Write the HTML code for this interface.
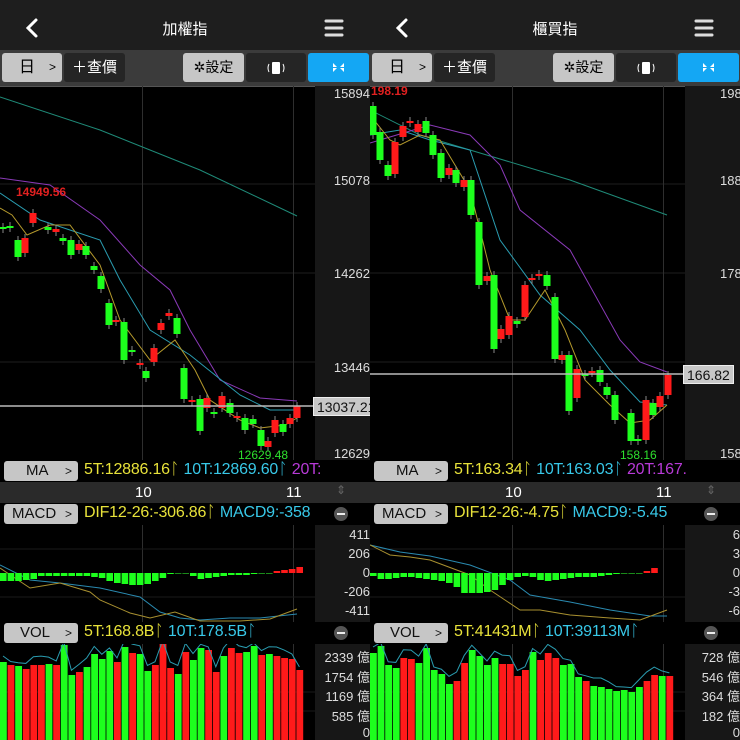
<!DOCTYPE html>
<html><head><meta charset="utf-8"><style>
*{margin:0;padding:0;box-sizing:border-box}
body{width:740px;height:740px;background:#000;overflow:hidden;position:relative;font-family:"Liberation Sans","Noto Sans CJK TC",sans-serif}
.p{position:absolute;top:0;width:370px;height:740px;overflow:hidden}
.top{position:absolute;left:0;top:0;width:370px;height:50px;background:#1e1e1e;color:#fff}
.title{position:absolute;left:0;width:370px;top:18px;text-align:center;font-size:15px}
.tb{position:absolute;top:50px;left:0;width:370px;height:36px;background:#3b3b3b}
.b{position:absolute;top:3px;height:29px;border-radius:3px;font-size:14px;line-height:29px;text-align:center}
.lb{background:#c6c6c6;color:#000}.db{background:#252525;color:#fff}
.row{position:absolute;left:0;width:370px;height:22px;background:#000}
.btn{position:absolute;left:4px;top:1px;width:74px;height:20px;background:#c6c6c6;border-radius:3px;color:#111;font-size:15px;line-height:20px;padding-left:22px}
.btn i{position:absolute;right:6px;font-style:normal;font-size:12px}
.lab{position:absolute;left:84px;top:1px;font-size:16px;white-space:nowrap;letter-spacing:-0.2px}
svg{position:absolute;left:0;top:0}
.ax{position:absolute;font-size:13px;color:#ddd;text-align:right}
</style></head><body>
<div class="p" id="p0" style="left:0"></div>
<div class="p" id="p1" style="left:370px"></div>
<script>
const L={title:"加權指",
c:[[3,227,229,'g'],[10,226,228,'g'],[18,240,257,'g'],[25,238,253,'r'],[33,213,223,'r'],[48,227,230,'g'],[56,229,232,'r'],[63,238,241,'g'],[71,240,255,'g'],[79,244,250,'r'],[86,246,255,'g'],[94,266,270,'g'],[101,276,289,'g'],[109,303,325,'g'],[116,320,322,'r'],[124,322,360,'g'],[132,350,352,'g'],[140,363,365,'r'],[146,371,378,'g'],[154,348,362,'r'],[161,323,330,'r'],[169,313,316,'r'],[177,318,334,'g'],[184,368,399,'g'],[192,400,402,'r'],[200,399,431,'g'],[207,398,408,'r'],[214,412,414,'g'],[222,396,408,'r'],[230,403,413,'g'],[237,416,418,'r'],[245,418,430,'g'],[253,419,424,'g'],[261,430,446,'g'],[268,441,447,'r'],[275,420,433,'r'],[283,424,432,'g'],[290,418,424,'r'],[297,406,418,'r']],
teal:"0,97 100,130 200,170 297,216",
pur:"0,178 50,185 100,220 140,265 170,290 190,330 220,380 260,398 297,401",
cy:"0,193 40,220 100,240 120,280 150,330 190,355 240,395 270,410 297,410",
ye:"0,208 12,215 27,235 50,225 70,225 100,265 120,320 150,360 175,340 195,370 210,400 240,420 260,428 285,425 297,418",
ax:["15894","15078","14262","13446","12629"],price:"13037.21",py:406,
hi:["14949.56",16,196],lo:["12629.48",238,459],
ma:["5T:12886.16","10T:12869.60","20T:"],
macd:["DIF12-26:-306.86","MACD9:-358"],
mh:[8,8,8,7,6,3,3,3,3,3,3,3,4,5,8,10,11,12,12,11,8,5,1,0,0,3,6,5,4,3,2,2,2,1,0,0,-2,-3,-4,-6],
mx:["411","206","0","-206","-411"],
md1:"0,565 30,580 60,583 100,588 140,597 160,612 180,618 200,620 230,618 260,618 297,614",
md2:"0,568 30,588 60,583 90,592 100,600 130,613 150,618 175,612 200,621 240,621 270,619 297,609",
vol:["5T:168.8B","10T:178.5B"],
vt:[662,665,666,669,665,665,664,665,645,675,672,667,654,659,651,662,647,653,654,671,665,644,668,674,652,660,648,650,672,656,648,653,652,646,655,654,656,658,659,670],
vc:"grgrrrgrggrggggrgrggrrrgrggrrgrrggrgrrrr",
vx:["2339 億","1754 億","1169 億","585 億","0"]};
const R={title:"櫃買指",
c:[[3,106,135,'g'],[10,132,160,'g'],[18,165,176,'g'],[25,142,174,'r'],[33,126,137,'r'],[40,121,123,'r'],[48,124,132,'r'],[56,121,133,'g'],[63,135,155,'g'],[71,153,178,'g'],[79,168,175,'r'],[86,170,183,'g'],[94,180,187,'r'],[101,180,215,'g'],[109,222,285,'g'],[117,276,281,'r'],[124,275,349,'g'],[131,329,339,'r'],[139,316,335,'r'],[147,321,324,'g'],[155,285,317,'r'],[162,278,280,'r'],[169,274,276,'r'],[177,275,286,'g'],[185,297,359,'g'],[192,355,360,'r'],[199,355,411,'g'],[207,369,398,'r'],[215,374,376,'g'],[222,371,373,'r'],[230,370,382,'g'],[237,387,395,'g'],[245,395,420,'g'],[261,413,441,'g'],[268,439,441,'g'],[276,400,440,'r'],[283,403,415,'g'],[290,396,407,'r'],[298,375,395,'r']],
teal:"0,110 50,135 100,150 200,180 297,215",
pur:"0,143 60,125 100,135 130,165 150,210 200,250 250,340 270,362 297,372",
cy:"0,135 30,130 60,140 100,150 130,240 170,295 210,330 240,370 270,402 297,405",
ye:"0,115 20,140 30,145 50,135 70,140 100,190 120,270 140,320 155,320 175,290 195,330 215,380 240,405 260,423 280,420 297,405",
ax:["198","188","178","","158"],price:"166.82",py:374,
hi:["198.19",1,95],lo:["158.16",250,459],
ma:["5T:163.34","10T:163.03","20T:167."],
macd:["DIF12-26:-4.75","MACD9:-5.45"],
mh:[3,6,6,5,4,4,5,6,7,8,10,14,20,20,20,19,17,12,7,4,3,4,7,8,7,6,5,4,4,4,3,2,1,0,0,0,-2,-5],
mx:["6","3","0","-3","-6"],
md1:"0,545 30,552 60,556 100,565 140,580 160,595 200,602 240,610 280,616 297,616",
md2:"0,545 20,555 40,557 60,560 100,575 120,590 150,610 170,610 200,615 240,618 270,620 297,610",
vol:["5T:41431M","10T:39113M"],
vt:[653,646,665,668,658,659,663,648,670,674,684,681,663,650,656,665,658,664,664,676,670,652,660,653,658,665,664,677,681,686,687,689,691,690,692,687,681,675,676,676],
vc:"ggggrrgggggrrggggrrrrgrrrgggrgggggggrrgr",
vx:["728 億","546 億","364 億","182 億","0"]};
function build(id,d){
 const G='#1dff1d',Rd='#ff1a1a';
 let s=`<svg width="370" height="740">`;
 s+=`<rect x="315" y="86" width="55" height="375" fill="#171717"/><rect x="315" y="525" width="55" height="97" fill="#171717"/><rect x="315" y="643" width="55" height="97" fill="#171717"/>`;
 s+=`<line x1="0" y1="86.5" x2="315" y2="86.5" stroke="#555"/>`;
 for(const y of [184,273,362])s+=`<line x1="0" y1="${y}" x2="315" y2="${y}" stroke="#1e1e1e"/>`;
 for(const x of [142.5,293.5])for(const [a,b] of [[86,460],[525,622],[643,740]])s+=`<line x1="${x}" y1="${a}" x2="${x}" y2="${b}" stroke="#2e2e2e"/>`;
 for(const y of [549,597,692,711])s+=`<line x1="0" y1="${y}" x2="315" y2="${y}" stroke="#1a1a1a"/>`;
 const pl=(p,c)=>`<polyline points="${p}" fill="none" stroke="${c}" stroke-width="1"/>`;
 s+=pl(d.teal,'#1f8a78')+pl(d.pur,'#8a3ab8')+pl(d.cy,'#2a9cb0')+pl(d.ye,'#b59a2c');
 for(const [x,t,b,c] of d.c){const col=c=='g'?G:Rd;s+=`<line x1="${x}" y1="${t-4}" x2="${x}" y2="${b+4}" stroke="#888"/><rect x="${x-3.5}" y="${t}" width="7" height="${Math.max(2,b-t)}" fill="${col}"/>`;}
 s+=`<line x1="0" y1="${d.py}" x2="315" y2="${d.py}" stroke="#bbb" stroke-width="1.5"/>`;
 s+=`<text x="${d.hi[1]}" y="${d.hi[2]}" fill="#e02020" font-size="12" font-weight="bold" font-family="Liberation Sans">${d.hi[0]}</text>`;
 s+=`<text x="${d.lo[1]}" y="${d.lo[2]}" fill="#2ee02e" font-size="12" font-family="Liberation Sans">${d.lo[0]}</text>`;
 s+=pl(d.md1,'#2a8ab0')+pl(d.md2,'#a89030');
 d.mh.forEach((h,i)=>{const x=i*7.6;if(h>0)s+=`<rect x="${x}" y="573" width="6.6" height="${h}" fill="${G}"/>`;else if(h<0)s+=`<rect x="${x}" y="${573+h}" width="6.6" height="${-h}" fill="${Rd}"/>`;else s+=`<rect x="${x}" y="573" width="6.6" height="1" fill="#1a8a1a"/>`;});
 d.vt.forEach((t,i)=>{const x=i*7.6;s+=`<rect x="${x}" y="${t}" width="6.8" height="${740-t}" fill="${d.vc[i]=='g'?G:Rd}"/>`;});
 const v1=d.vt.map((t,i)=>`${i*7.6+3},${t-6+Math.sin(i)*3}`).join(' ');
 s+=pl(v1,'#2a9cb0');
 s+=`</svg>`;
 s+=`<div class="top"><svg width="370" height="50"><path d="M36 20 L28 28 L36 36" stroke="#fff" stroke-width="3" fill="none" stroke-linecap="round"/><g stroke="#ddd" stroke-width="3" stroke-linecap="round"><line x1="326" y1="21" x2="342" y2="21"/><line x1="326" y1="28" x2="342" y2="28"/><line x1="326" y1="35" x2="342" y2="35"/></g></svg><div class="title">${d.title}</div></div>`;
 s+=`<div class="tb"><div class="b lb" style="left:2px;width:60px;text-align:left;padding-left:17px;font-size:16px">日<span style="position:absolute;right:6px;font-size:12px">&gt;</span></div><div class="b db" style="left:64px;width:61px;font-size:15px">＋查價</div><div class="b lb" style="left:183px;width:61px;font-size:14px">✲設定</div><div class="b db" style="left:246px;width:60px"><svg width="60" height="29" style="position:static"><rect x="26" y="9" width="8" height="12" fill="#fff" rx="1"/><path d="M23 11 Q21 15 23 19 M37 11 Q39 15 37 19" stroke="#fff" fill="none"/></svg></div><div class="b" style="left:308px;width:61px;background:#14a7f4"><svg width="61" height="29" style="position:static"><g fill="#fff"><path d="M25 10 L29 14 L25 14Z M36 10 L32 14 L36 14Z M25 19 L29 15 L25 15Z M36 19 L32 15 L36 15Z"/></g></svg></div></div>`;
 d.ax.forEach((t,i)=>{const ys=[86,173,266,360,446];s+=`<div class="ax" style="left:315px;width:${id?60:55}px;top:${ys[i]}px;${id?'text-align:left;padding-left:35px':''}">${t}</div>`;});
 s+=`<div style="position:absolute;left:313px;top:${d.py-9}px;height:19px;background:#c8c8c8;color:#111;font-size:14px;line-height:19px;padding:0 3px;border:1px solid #eee">${d.price}</div>`;
 s+=`<div class="row" style="top:460px"><div class="btn">MA<i>&gt;</i></div><div class="lab"><span style="color:#e8e23a">${d.ma[0]}ᛚ</span> <span style="color:#38c8e8">${d.ma[1]}ᛚ</span> <span style="color:#b83ad8">${d.ma[2]}</span></div></div>`;
 s+=`<div class="row" style="top:482px;height:21px;background:#2a2a2a;color:#fff;font-size:15px"><span style="position:absolute;left:135px;top:2px">10</span><span style="position:absolute;left:286px;top:2px">11</span><span style="position:absolute;left:336px;top:1px;color:#666;font-size:12px">⇕</span></div>`;
 const minus=`<div style="position:absolute;left:334px;top:4px;width:14px;height:14px;border-radius:7px;background:#555"><div style="position:absolute;left:3px;top:6px;width:8px;height:2px;background:#eee"></div></div>`;
 s+=`<div class="row" style="top:503px"><div class="btn" style="padding-left:8px">MACD<i>&gt;</i></div><div class="lab"><span style="color:#e8e23a">${d.macd[0]}ᛚ</span> <span style="color:#38c8e8">${d.macd[1]}</span></div>${minus}</div>`;
 d.mx.forEach((t,i)=>{s+=`<div class="ax" style="left:315px;width:55px;top:${527+i*19}px">${t}</div>`;});
 s+=`<div class="row" style="top:622px"><div class="btn" style="padding-left:16px">VOL<i>&gt;</i></div><div class="lab"><span style="color:#e8e23a">${d.vol[0]}ᛚ</span> <span style="color:#38c8e8">${d.vol[1]}ᛚ</span></div>${minus}</div>`;
 d.vx.forEach((t,i)=>{s+=`<div class="ax" style="left:315px;width:55px;top:${647+i*19.5}px">${t}</div>`;});
 document.getElementById('p'+id).innerHTML=s;
}
build(0,L);build(1,R);
</script>
</body></html>
